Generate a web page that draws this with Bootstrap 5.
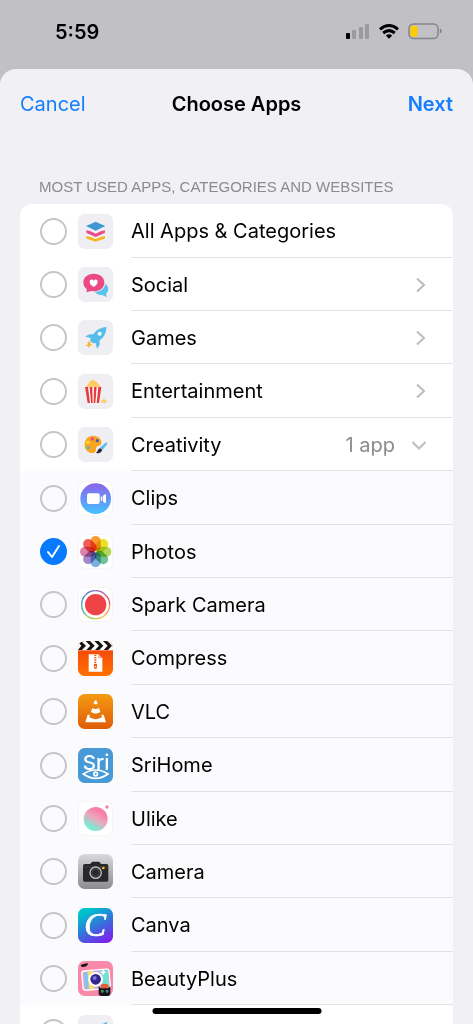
<!DOCTYPE html>
<html lang="en">
<head>
<meta charset="utf-8">
<meta name="viewport" content="width=device-width, initial-scale=1">
<title>Choose Apps</title>
<link href="https://cdn.jsdelivr.net/npm/bootstrap@5.3.0/dist/css/bootstrap.min.css" rel="stylesheet">
<script defer src="https://cdn.jsdelivr.net/npm/bootstrap@5.3.0/dist/js/bootstrap.bundle.min.js"></script>
<style>
  body { font-family: Inter, Roboto, "Liberation Sans", sans-serif; font-size: 20px; line-height: 24px; color: #000; background: #c1c0c5; }
  .status { height: 69px; padding: 0 31px 6px 55px; }
  .sheet { background: #f1f0f5; border-radius: 16px 16px 0 0; padding: 0 20px; }
  .sheet-bar { height: 70px; }
  .sheet-bar .btn { --bs-btn-font-size: 20px; --bs-btn-line-height: 24px; color: #147efb; }
  .sheet-title { font-size: 20px; line-height: 24px; }
  .section-title { font-family: "Liberation Sans", sans-serif; font-size: 15px; line-height: 20px; color: #8a8a8f; margin: 38px 0 7px; padding-left: 19px; }
  .app-list { --bs-list-group-border-radius: 12px; overflow: hidden; background: #fff; }
  .app-row { height: 53px; padding-left: 20px; }
  .app-row:nth-child(5n+1), .app-row:nth-child(5n+4) { height: 54px; }
  .app-row.nested { background: #fbfafd; }
  .app-row .form-check-input { width: 27px; height: 27px; margin: 0 11px 0 0; border: 2px solid #c6c6c8; border-radius: 50%; background-color: transparent; }
  .app-row .form-check-input:checked { background-color: #077aff; border-color: #077aff; background-size: 27px 27px;
    background-image: url("data:image/svg+xml,%3csvg xmlns='http://www.w3.org/2000/svg' viewBox='0 0 27 27'%3e%3cpath fill='none' stroke='%23fff' stroke-width='2' stroke-linecap='round' stroke-linejoin='round' d='M8 14l4 5 7-11'/%3e%3c/svg%3e"); }
  .app-icon { width: 35px; height: 35px; margin-right: 18px; }
  .app-text { border-bottom: 1px solid #e3e3e6; padding: 1px 26px 0 0; }
  .count { color: #8a8a8f; margin-right: 16px; }
  .chev { color: #bcbcc0; }
  .petals rect { mix-blend-mode: multiply; }
  .home-bar { width: 169px; height: 6px; bottom: 10px; background: #000; }
</style>
</head>
<body class="vh-100 overflow-hidden">
<div class="d-flex flex-column vh-100 overflow-hidden">
  <header class="status d-flex align-items-center justify-content-between flex-shrink-0">
    <span class="fw-semibold">5:59</span>
    <div class="d-flex align-items-center">
      <svg width="96" height="18" viewBox="0 0 96 18" role="img" aria-label="Signal, Wi-Fi and battery">
        <rect x="0" y="10" width="4" height="6" rx="1" fill="#000"/>
        <g fill="#9b9a9e"><rect x="6" y="7" width="4" height="9" rx="1"/><rect x="13" y="4" width="4" height="12" rx="1"/><rect x="19" y="1" width="4" height="15" rx="1"/></g>
        <g fill="none" stroke="#000" stroke-width="3"><path d="M34 6.300Q43 -1.300 52 6.300"/><path d="M37.200 10Q43 5.200 48.800 10"/></g>
        <path d="M43 15.800L39.800 12.500Q43 10 46.200 12.500Z" fill="#000"/>
        <rect x="63" y="1" width="29" height="14.500" rx="4.500" fill="none" stroke="#858489" stroke-width="1.500"/>
        <rect x="64.500" y="2.800" width="7" height="11" rx="2" fill="#fc0"/>
        <path d="M93.800 5.500v5q2-.6 2-2.500t-2-2.500z" fill="#858489"/>
      </svg>
    </div>
  </header>

  <main class="sheet flex-grow-1 overflow-hidden">
    <nav class="sheet-bar row g-0 align-items-center" aria-label="Sheet">
      <div class="col-3 d-flex"><button type="button" class="btn p-0 border-0">Cancel</button></div>
      <div class="col-6 text-center"><h1 class="sheet-title fw-semibold m-0">Choose Apps</h1></div>
      <div class="col-3 d-flex justify-content-end"><button type="button" class="btn p-0 border-0 fw-semibold">Next</button></div>
    </nav>
    <h2 class="section-title fw-normal text-nowrap">MOST USED APPS, CATEGORIES AND WEBSITES</h2>

    <ul class="app-list list-group list-unstyled m-0 rounded-bottom-0">
      <li class="app-row d-flex align-items-center">
        <input class="form-check-input flex-shrink-0" type="checkbox" id="a1">
        <svg class="app-icon flex-shrink-0" viewBox="0 0 105 105" aria-hidden="true"><rect width="105" height="105" rx="20" fill="#efeef3"/><path d="M24 36Q40 29 53 23Q66 29 82 36Q66 44 53 50Q40 44 24 36Z" fill="#3f97d3"/><path d="M25 49L38 52L53 59L68 52L81 49Q82 54 80 57L53 69L26 57Q24 54 25 49Z" fill="#ec4b8b"/><path d="M25 66L38 69L53 75L68 69L81 66Q82 71 80 74L53 83L26 74Q24 71 25 66Z" fill="#fcb520"/></svg>
        <div class="app-text d-flex align-items-center flex-grow-1 align-self-stretch"><label class="flex-grow-1" for="a1">All Apps &amp; Categories</label></div>
      </li>
      <li class="app-row d-flex align-items-center">
        <input class="form-check-input flex-shrink-0" type="checkbox" id="a2">
        <svg class="app-icon flex-shrink-0" viewBox="0 0 105 105" aria-hidden="true"><rect width="105" height="105" rx="20" fill="#efeef3"/><path d="M82 50C94 59 93 73 84 80L86 91L73 84C63 85 53 79 51 74C66 74 80 66 82 50Z" fill="#59c2ef"/><path d="M47 20C66 20 79 31 79 47S65 73 47 73L39 72L26 76L26 66C19 61 16 54 16 46C16 31 29 20 47 20Z" fill="#ea4985"/><path d="M47 60C39 54 35 50 35 44C35 37 44 35 47 42C50 35 59 37 59 44C59 50 55 54 47 60Z" fill="#fff"/></svg>
        <div class="app-text d-flex align-items-center flex-grow-1 align-self-stretch"><label class="flex-grow-1" for="a2">Social</label>
          <button type="button" class="btn p-0 border-0 chev d-flex" aria-label="Show Social apps"><svg width="12" height="16" viewBox="0 0 12 16" fill="none" stroke="currentColor" stroke-width="2"><path d="M2 1.500l7 6.500-7 6.500"/></svg></button></div>
      </li>
      <li class="app-row d-flex align-items-center">
        <input class="form-check-input flex-shrink-0" type="checkbox" id="a3">
        <svg class="app-icon flex-shrink-0" viewBox="0 0 105 105" aria-hidden="true"><rect width="105" height="105" rx="20" fill="#efeef3"/><path d="M85 21C67 23 55 29 46 43C36 41 28 44 22 50L38 54L36 62L45 70L53 69L57 86C64 78 67 71 64 62C78 52 85 39 85 21Z" fill="#56bdea"/><circle cx="65" cy="41" r="6" fill="#fff"/><path d="M36 64L38 72L43 76L36 77L31 84L29 78L23 77L29 73L29 66Z" fill="#fbb731"/></svg>
        <div class="app-text d-flex align-items-center flex-grow-1 align-self-stretch"><label class="flex-grow-1" for="a3">Games</label>
          <button type="button" class="btn p-0 border-0 chev d-flex" aria-label="Show Games apps"><svg width="12" height="16" viewBox="0 0 12 16" fill="none" stroke="currentColor" stroke-width="2"><path d="M2 1.500l7 6.500-7 6.500"/></svg></button></div>
      </li>
      <li class="app-row d-flex align-items-center">
        <input class="form-check-input flex-shrink-0" type="checkbox" id="a4">
        <svg class="app-icon flex-shrink-0" viewBox="0 0 105 105" aria-hidden="true"><rect width="105" height="105" rx="20" fill="#efeef3"/><path d="M25 42C24 34 29 32 32 29C32 21 39 22 43 18C48 17 52 20 54 23C60 24 59 29 63 32C67 34 67 39 66 42Z" fill="#fdcc67"/><path d="M21 39H70L63 87H29Z" fill="#fff"/><path d="M21 39H30L36 87H29ZM35 39H43L44 87H39ZM48 39H56L52 87H47ZM61 39H70L63 87H56Z" fill="#e63b3c"/><path d="M70 85C70 78 75 79 76 75C82 74 82 79 86 81V85Q78 88 70 85Z" fill="#fdcc67"/></svg>
        <div class="app-text d-flex align-items-center flex-grow-1 align-self-stretch"><label class="flex-grow-1" for="a4">Entertainment</label>
          <button type="button" class="btn p-0 border-0 chev d-flex" aria-label="Show Entertainment apps"><svg width="12" height="16" viewBox="0 0 12 16" fill="none" stroke="currentColor" stroke-width="2"><path d="M2 1.500l7 6.500-7 6.500"/></svg></button></div>
      </li>
      <li class="app-row d-flex align-items-center">
        <input class="form-check-input flex-shrink-0" type="checkbox" id="a5">
        <svg class="app-icon flex-shrink-0" viewBox="0 0 105 105" aria-hidden="true"><rect width="105" height="105" rx="20" fill="#efeef3"/><path d="M44 26C61 26 72 37 70 49C69 57 61 56 57 59C52 62 56 68 52 74C47 81 32 79 24 68C14 53 22 26 44 26Z" fill="#f7a71f"/><circle cx="30" cy="46" r="5" fill="#ffdf28"/><circle cx="43" cy="36" r="5" fill="#ec4684"/><circle cx="58" cy="41" r="5" fill="#4761ac"/><circle cx="31" cy="62" r="5" fill="#5cb9a3"/><path d="M66 62L82 47Q88 45 88 51L74 68Z" fill="#59bfe9"/><path d="M66 63L73 69L69 75Q62 81 54 77Q59 74 60 68Z" fill="#292a36"/></svg>
        <div class="app-text d-flex align-items-center flex-grow-1 align-self-stretch"><label class="flex-grow-1" for="a5">Creativity</label><span class="count">1 app</span>
          <button type="button" class="btn p-0 border-0 chev d-flex" aria-label="Hide Creativity apps"><svg width="16" height="12" viewBox="0 0 16 12" fill="none" stroke="currentColor" stroke-width="2"><path d="M1.500 3L8 9.500 14.500 3"/></svg></button></div>
      </li>
      <li class="app-row nested d-flex align-items-center">
        <input class="form-check-input flex-shrink-0" type="checkbox" id="a6">
        <svg class="app-icon flex-shrink-0" viewBox="0 0 105 105" aria-hidden="true"><defs><linearGradient id="clips" x2="0" y2="1"><stop stop-color="#8c62ec"/><stop offset="1" stop-color="#43c3ff"/></linearGradient></defs><rect x="1" y="1" width="103" height="103" rx="20" fill="#fff" stroke="#eeedf0" stroke-width="2"/><circle cx="53" cy="53" r="46" fill="url(#clips)"/><rect x="27" y="37" width="38" height="32" rx="6" fill="#fff"/><path d="M68 48L73 45V61L68 58ZM75 44L81 40Q84 39 84 43V63Q84 67 81 66L75 62Z" fill="#fff"/></svg>
        <div class="app-text d-flex align-items-center flex-grow-1 align-self-stretch"><label class="flex-grow-1" for="a6">Clips</label></div>
      </li>
      <li class="app-row nested d-flex align-items-center">
        <input class="form-check-input flex-shrink-0" type="checkbox" id="a7" checked>
        <svg class="app-icon flex-shrink-0" viewBox="0 0 105 105" aria-hidden="true"><rect x="1" y="1" width="103" height="103" rx="20" fill="#fff" stroke="#eeedf0" stroke-width="2"/>
          <g class="petals"><rect x="38" y="6" width="30" height="45" rx="15" fill="#f99b2d"/>
          <rect transform="rotate(45 53 53)" x="38" y="6" width="30" height="45" rx="15" fill="#eee025"/>
          <rect transform="rotate(90 53 53)" x="38" y="6" width="30" height="45" rx="15" fill="#b5d957"/>
          <rect transform="rotate(135 53 53)" x="38" y="6" width="30" height="45" rx="15" fill="#6fc293"/>
          <rect transform="rotate(180 53 53)" x="38" y="6" width="30" height="45" rx="15" fill="#77b1e2"/>
          <rect transform="rotate(225 53 53)" x="38" y="6" width="30" height="45" rx="15" fill="#a58acb"/>
          <rect transform="rotate(270 53 53)" x="38" y="6" width="30" height="45" rx="15" fill="#da83ac"/>
          <rect transform="rotate(315 53 53)" x="38" y="6" width="30" height="45" rx="15" fill="#f15d50"/></g></svg>
        <div class="app-text d-flex align-items-center flex-grow-1 align-self-stretch"><label class="flex-grow-1" for="a7">Photos</label></div>
      </li>
      <li class="app-row nested d-flex align-items-center">
        <input class="form-check-input flex-shrink-0" type="checkbox" id="a8">
        <svg class="app-icon flex-shrink-0" viewBox="0 0 105 105" aria-hidden="true"><rect x="1" y="1" width="103" height="103" rx="20" fill="#fff" stroke="#eeedf0" stroke-width="2"/><g fill="none" stroke-width="4"><path d="M95 53A42 42 0 0 1 82 83" stroke="#f29a58"/><path d="M82 83A42 42 0 0 1 53 95" stroke="#ecc04f"/><path d="M53 95A42 42 0 0 1 23 83" stroke="#9fc95e"/><path d="M23 83A42 42 0 0 1 11 53" stroke="#4fb5a6"/><path d="M11 53A42 42 0 0 1 23 23" stroke="#4c9ece"/><path d="M23 23A42 42 0 0 1 53 11" stroke="#6979bd"/><path d="M53 11A42 42 0 0 1 82 23" stroke="#a35ba5"/><path d="M82 23A42 42 0 0 1 95 53" stroke="#e45268"/></g><circle cx="53" cy="53" r="32" fill="#ee4448"/></svg>
        <div class="app-text d-flex align-items-center flex-grow-1 align-self-stretch"><label class="flex-grow-1" for="a8">Spark Camera</label></div>
      </li>
      <li class="app-row nested d-flex align-items-center">
        <input class="form-check-input flex-shrink-0" type="checkbox" id="a9">
        <svg class="app-icon flex-shrink-0" viewBox="0 0 105 105" aria-hidden="true"><defs><linearGradient id="comp" x2="0" y2="1"><stop stop-color="#f23c0c"/><stop offset="1" stop-color="#ff7200"/></linearGradient><clipPath id="tile"><rect width="105" height="105" rx="20"/></clipPath></defs><g clip-path="url(#tile)"><rect width="105" height="105" fill="url(#comp)"/><rect width="105" height="28" fill="#fff"/><path d="M0 3H12L24 14L12 27H0L10 14ZM23 0H36L50 14L38 27H25L37 14ZM49 0H62L76 14L64 27H51L63 14ZM75 0H88L102 14L90 27H77L89 14ZM101 0H105V7Z" fill="#17120f"/></g><path d="M32 40H61L73 52V92H32Z" fill="#fff"/><path d="M61 40V52H73" fill="#f6a789"/><path d="M52 41v28" stroke="#f65310" stroke-width="6" stroke-dasharray="4 3"/><rect x="48" y="68" width="9" height="15" rx="3" fill="#f65310"/><path d="M50 77h5" stroke="#fff" stroke-width="3"/></svg>
        <div class="app-text d-flex align-items-center flex-grow-1 align-self-stretch"><label class="flex-grow-1" for="a9">Compress</label></div>
      </li>
      <li class="app-row nested d-flex align-items-center">
        <input class="form-check-input flex-shrink-0" type="checkbox" id="a10">
        <svg class="app-icon flex-shrink-0" viewBox="0 0 105 105" aria-hidden="true"><defs><linearGradient id="vlc" x2="0" y2="1"><stop stop-color="#f59b11"/><stop offset="1" stop-color="#df5c08"/></linearGradient></defs><rect width="105" height="105" rx="20" fill="url(#vlc)"/><path d="M47 29L50 20Q53 17 56 20L59 29Q53 33 47 29ZM43 42Q53 48 63 42L67 54Q53 63 39 54ZM29 62H36L34 70Q53 81 72 70L70 62H77L84 85H22Z" fill="#fff"/></svg>
        <div class="app-text d-flex align-items-center flex-grow-1 align-self-stretch"><label class="flex-grow-1" for="a10">VLC</label></div>
      </li>
      <li class="app-row nested d-flex align-items-center">
        <input class="form-check-input flex-shrink-0" type="checkbox" id="a11">
        <svg class="app-icon flex-shrink-0" viewBox="0 0 105 105" aria-hidden="true"><rect width="105" height="105" rx="20" fill="#4899d7"/><text x="14" y="66" font-family="Inter, sans-serif" font-size="62" font-weight="500" fill="#fff">Sri</text><path d="M16 78Q53 54 90 78Q53 104 16 78Z" fill="#4899d7" stroke="#fff" stroke-width="5"/><circle cx="53" cy="78" r="8" fill="#fff"/><circle cx="53" cy="78" r="3" fill="#4899d7"/></svg>
        <div class="app-text d-flex align-items-center flex-grow-1 align-self-stretch"><label class="flex-grow-1" for="a11">SriHome</label></div>
      </li>
      <li class="app-row nested d-flex align-items-center">
        <input class="form-check-input flex-shrink-0" type="checkbox" id="a12">
        <svg class="app-icon flex-shrink-0" viewBox="0 0 105 105" aria-hidden="true"><defs><linearGradient id="ulike" x1=".75" y1=".1" x2=".25" y2=".95"><stop offset=".1" stop-color="#fb7ca6"/><stop offset=".5" stop-color="#e6adc0"/><stop offset=".9" stop-color="#76ecd5"/></linearGradient></defs><rect x="1" y="1" width="103" height="103" rx="20" fill="#fff" stroke="#eeedf0" stroke-width="2"/><circle cx="53" cy="54" r="36" fill="url(#ulike)"/><circle cx="87" cy="18" r="5" fill="#f97ba2"/></svg>
        <div class="app-text d-flex align-items-center flex-grow-1 align-self-stretch"><label class="flex-grow-1" for="a12">Ulike</label></div>
      </li>
      <li class="app-row nested d-flex align-items-center">
        <input class="form-check-input flex-shrink-0" type="checkbox" id="a13">
        <svg class="app-icon flex-shrink-0" viewBox="0 0 105 105" aria-hidden="true"><defs><linearGradient id="cam" x2="0" y2="1"><stop stop-color="#d9d8db"/><stop offset="1" stop-color="#8c8b8f"/></linearGradient></defs><rect width="105" height="105" rx="20" fill="url(#cam)"/><path d="M20 30H35Q38 30 40 26Q41 23 45 23H61Q65 23 66 26Q68 30 71 30H86Q91 30 91 35V78Q91 83 86 83H20Q15 83 15 78V35Q15 30 20 30Z" fill="#28282a"/><path d="M15 39H91" stroke="#4b4a4d" stroke-width="2"/><circle cx="53" cy="56" r="17" fill="#28282a" stroke="#c2c2c4" stroke-width="4"/><circle cx="53" cy="56" r="11" fill="none" stroke="#59595b" stroke-width="2"/><circle cx="76" cy="42" r="4" fill="#fbc411"/></svg>
        <div class="app-text d-flex align-items-center flex-grow-1 align-self-stretch"><label class="flex-grow-1" for="a13">Camera</label></div>
      </li>
      <li class="app-row nested d-flex align-items-center">
        <input class="form-check-input flex-shrink-0" type="checkbox" id="a14">
        <svg class="app-icon flex-shrink-0" viewBox="0 0 105 105" aria-hidden="true"><defs><linearGradient id="canva" x1=".2" y1="0" x2=".75" y2="1"><stop offset=".1" stop-color="#00c2cc"/><stop offset=".5" stop-color="#2e79da"/><stop offset="1" stop-color="#7d20ed"/></linearGradient></defs><rect width="105" height="105" rx="20" fill="url(#canva)"/><text x="19" y="85" font-family="'Liberation Serif', serif" font-style="italic" font-size="98" fill="#fff" stroke="#fff" stroke-width="2">C</text></svg>
        <div class="app-text d-flex align-items-center flex-grow-1 align-self-stretch"><label class="flex-grow-1" for="a14">Canva</label></div>
      </li>
      <li class="app-row nested d-flex align-items-center">
        <input class="form-check-input flex-shrink-0" type="checkbox" id="a15">
        <svg class="app-icon flex-shrink-0" viewBox="0 0 105 105" aria-hidden="true"><rect width="105" height="105" rx="20" fill="#f889a8"/><g transform="rotate(-5 53 55)"><rect x="13" y="27" width="82" height="58" rx="8" fill="#f7a6be" stroke="#fff" stroke-width="4"/><path d="M30 29H48V83H30Z" fill="#f9dc74"/><path d="M19 31H30V81H19Z" fill="#78c7f4"/><path d="M48 29H72V83H48Z" fill="#c0b3f3"/><path d="M72 29H92V83H72Z" fill="#72e1d6"/></g><circle cx="53" cy="55" r="22" fill="#fff"/><circle cx="53" cy="55" r="16" fill="#34258e"/><circle cx="50" cy="51" r="6" fill="#7d72cf"/><path d="M76 25L79 31L85 34L79 37L76 43L73 37L67 34L73 31Z" fill="#fff"/><path d="M8 12L19 8L31 7L27 14L20 17L11 18Z" fill="#17131b"/><ellipse cx="80" cy="76" rx="12" ry="8" fill="#e95a35"/><path d="M62 76L69 82H90L97 76V99Q96 105 90 105H69Q62 104 62 99Z" fill="#17131b"/><circle cx="73" cy="91" r="4" fill="#6db86d"/><circle cx="87" cy="91" r="4" fill="#53a6c9"/><circle cx="73" cy="91" r="1.500" fill="#111"/><circle cx="87" cy="91" r="1.500" fill="#111"/></svg>
        <div class="app-text d-flex align-items-center flex-grow-1 align-self-stretch"><label class="flex-grow-1" for="a15">BeautyPlus</label></div>
      </li>
      <li class="app-row d-flex align-items-center">
        <input class="form-check-input flex-shrink-0" type="checkbox" id="a16" aria-label="Next category">
        <svg class="app-icon flex-shrink-0" viewBox="0 0 105 105" aria-hidden="true"><rect width="105" height="105" rx="20" fill="#efeef3"/><path d="M88 20L22 52L42 62L46 84L56 68L72 75Z" fill="#56bdea"/><path d="M88 20L42 62L46 84L50 65Z" fill="#3596cf"/></svg>
        <div class="app-text flex-grow-1 align-self-stretch"></div>
      </li>
    </ul>
  </main>
</div>
<div class="home-bar rounded-pill position-fixed start-50 translate-middle-x" aria-hidden="true"></div>
</body>
</html>
